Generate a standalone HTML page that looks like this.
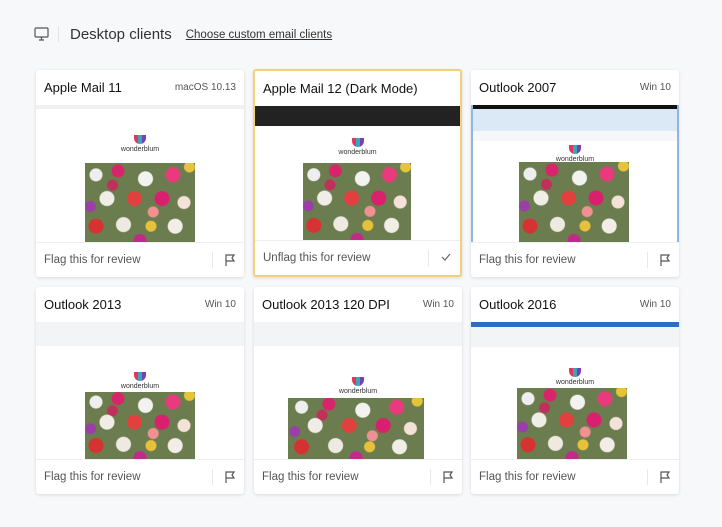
<!DOCTYPE html>
<html><head><style>
*{box-sizing:border-box;margin:0;padding:0}
body{width:722px;height:527px;background:#f7f8fa;font-family:"Liberation Sans",sans-serif;position:relative;overflow:hidden;color:#222}
.hdr{position:absolute;top:26px;left:34px;display:flex;align-items:center}
.hdr .t{font-size:15px;color:#333;margin-left:26px}
.hdr a{font-size:11.5px;color:#333;text-decoration:underline;margin-left:14px}
.sep{position:absolute;left:58px;top:26px;width:1px;height:16px;background:#e2e4e8}
.card{position:absolute;width:208px;height:207px;background:#fff;border-radius:3px;box-shadow:0 1px 3px rgba(0,0,0,.12);overflow:hidden}
.card.sel{border:2px solid #f1d27a}
.ch{height:35px;display:flex;justify-content:space-between;align-items:center;padding:0 8px}
.ch b{font-weight:normal;font-size:13px;color:#111}
.ch span{font-size:10px;color:#555}
.shot{position:absolute;top:35px;left:0;right:0;height:137px;background:#fff;overflow:hidden}
.bar{position:absolute;left:0;right:0;top:0;height:6px;background:#eee}
.logo{position:absolute;left:0;right:0;text-align:center;font-size:7px;color:#333}
.logo i{display:block;margin:0 auto 2px;width:12px;height:9px;background:linear-gradient(90deg,#e2365f 0 33%,#3aa6b9 33% 66%,#7a3fb8 66%);border-radius:0 0 6px 6px}
.fl{position:absolute;width:110px;height:80px;background:
radial-gradient(circle at 10% 15%,#eee 6px,transparent 7px),
radial-gradient(circle at 30% 10%,#d8246b 6px,transparent 7px),
radial-gradient(circle at 55% 20%,#f2f2f0 7px,transparent 8px),
radial-gradient(circle at 80% 15%,#e83a7c 7px,transparent 8px),
radial-gradient(circle at 95% 5%,#e6c43a 5px,transparent 6px),
radial-gradient(circle at 20% 45%,#f0ece6 7px,transparent 8px),
radial-gradient(circle at 45% 45%,#e2403f 7px,transparent 8px),
radial-gradient(circle at 70% 45%,#d91f6e 7px,transparent 8px),
radial-gradient(circle at 90% 50%,#f4e2d8 6px,transparent 7px),
radial-gradient(circle at 5% 55%,#9a3fa8 5px,transparent 6px),
radial-gradient(circle at 10% 80%,#d63232 7px,transparent 8px),
radial-gradient(circle at 35% 78%,#eeeae2 7px,transparent 8px),
radial-gradient(circle at 60% 80%,#e8c13a 5px,transparent 6px),
radial-gradient(circle at 82% 80%,#f2ede6 7px,transparent 8px),
radial-gradient(circle at 50% 98%,#c22a8a 6px,transparent 7px),
radial-gradient(circle at 25% 28%,#c0305a 5px,transparent 6px),
radial-gradient(circle at 62% 62%,#f09090 5px,transparent 6px),
#6b7d4e}
.cf{position:absolute;bottom:0;left:0;right:0;height:35px;border-top:1px solid #eceef0;display:flex;align-items:center;padding:0 8px;font-size:11.5px;color:#555}
.cf .ic{position:absolute;right:8px;top:10px}
.cf .d{position:absolute;right:31px;top:9px;width:1px;height:16px;background:#e6e8eb}
</style></head><body>
<svg style="position:absolute;left:34px;top:27px" width="15" height="14" viewBox="0 0 15 14" fill="none" stroke="#555" stroke-width="1.2"><rect x="1" y="1" width="13" height="9" rx="1"/><path d="M7.5 10v3M5 13h5"/></svg>
<div class="sep"></div>
<div class="hdr"><span class="t" style="margin-left:36px">Desktop clients</span><a>Choose custom email clients</a></div>

<div class="card" style="left:36px;top:70px"><div class="ch"><b>Apple Mail 11</b><span>macOS 10.13</span></div>
<div class="shot"><div class="bar" style="height:4px;background:#f0f0f0"></div><div class="logo" style="top:30px"><i></i>wonderblum</div><div class="fl" style="left:49px;top:58px;height:79px"></div></div>
<div class="cf">Flag this for review<div class="d"></div><svg class="ic" width="12" height="14" viewBox="0 0 12 14" fill="none" stroke="#555" stroke-width="1.2"><path d="M2 13V2h8l-2 3 2 3H2"/></svg></div></div>

<div class="card sel" style="left:253px;top:69px;width:209px;height:208px"><div class="ch"><b>Apple Mail 12 (Dark Mode)</b></div>
<div class="shot" style="top:35px"><div class="bar" style="height:20px;background:#222"></div><div class="logo" style="top:32px"><i></i>wonderblum</div><div class="fl" style="left:48px;top:57px;height:78px;width:108px"></div></div>
<div class="cf">Unflag this for review<div class="d"></div><svg class="ic" width="12" height="12" viewBox="0 0 12 12" fill="none" stroke="#666" stroke-width="1.2"><path d="M2 6l3 3 5-6"/></svg></div></div>

<div class="card" style="left:471px;top:70px"><div class="ch"><b>Outlook 2007</b><span>Win 10</span></div>
<div class="shot" style="border-left:2px solid #8fb5e0;border-right:2px solid #8fb5e0"><div class="bar" style="height:4px;background:#111"></div><div class="bar" style="top:4px;height:22px;background:#dbe8f6"></div><div class="bar" style="top:26px;height:10px;background:#f6f7f9"></div><div class="logo" style="top:40px"><i></i>wonderblum</div><div class="fl" style="left:46px;top:57px;height:80px"></div></div>
<div class="cf">Flag this for review<div class="d"></div><svg class="ic" width="12" height="14" viewBox="0 0 12 14" fill="none" stroke="#555" stroke-width="1.2"><path d="M2 13V2h8l-2 3 2 3H2"/></svg></div></div>

<div class="card" style="left:36px;top:287px"><div class="ch"><b>Outlook 2013</b><span>Win 10</span></div>
<div class="shot"><div class="bar" style="height:24px;background:#f3f4f6"></div><div class="logo" style="top:50px"><i></i>wonderblum</div><div class="fl" style="left:49px;top:70px;height:67px"></div></div>
<div class="cf">Flag this for review<div class="d"></div><svg class="ic" width="12" height="14" viewBox="0 0 12 14" fill="none" stroke="#555" stroke-width="1.2"><path d="M2 13V2h8l-2 3 2 3H2"/></svg></div></div>

<div class="card" style="left:254px;top:287px"><div class="ch"><b>Outlook 2013 120 DPI</b><span>Win 10</span></div>
<div class="shot"><div class="bar" style="height:24px;background:#f3f4f6"></div><div class="logo" style="top:55px"><i></i>wonderblum</div><div class="fl" style="left:34px;top:76px;width:136px;height:61px"></div></div>
<div class="cf">Flag this for review<div class="d"></div><svg class="ic" width="12" height="14" viewBox="0 0 12 14" fill="none" stroke="#555" stroke-width="1.2"><path d="M2 13V2h8l-2 3 2 3H2"/></svg></div></div>

<div class="card" style="left:471px;top:287px"><div class="ch"><b>Outlook 2016</b><span>Win 10</span></div>
<div class="shot"><div class="bar" style="height:5px;background:#2b6cc4"></div><div class="bar" style="top:5px;height:20px;background:#f3f4f6"></div><div class="logo" style="top:46px"><i></i>wonderblum</div><div class="fl" style="left:46px;top:66px;height:71px"></div></div>
<div class="cf">Flag this for review<div class="d"></div><svg class="ic" width="12" height="14" viewBox="0 0 12 14" fill="none" stroke="#555" stroke-width="1.2"><path d="M2 13V2h8l-2 3 2 3H2"/></svg></div></div>
</body></html>
